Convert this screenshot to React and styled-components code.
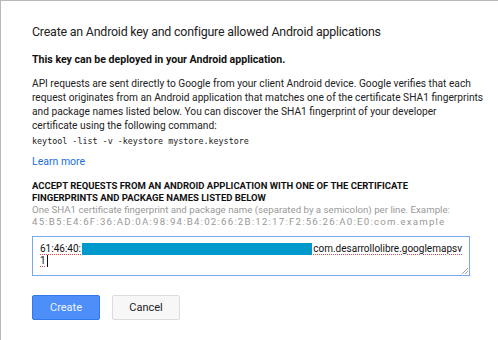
import React from "react";
import styled, { createGlobalStyle } from "styled-components";

const GlobalStyle = createGlobalStyle`
  body {
    margin: 0;
    background: #ffffff;
    font-family: Roboto, "Liberation Sans", Arial, sans-serif;
  }
`;

const Dialog = styled.div`
  width: 498px;
  height: 340px;
  box-sizing: border-box;
  border-top: 1px solid #b8b8b8;
  border-left: 1px solid #b8b8b8;
  padding: 21px 28px 0 31px;
  color: #222;
`;

const Title = styled.h1`
  margin: 0;
  font-size: 12.4px;
  line-height: 20px;
  font-weight: 400;
  letter-spacing: -0.2px;
  white-space: nowrap;
  color: #222;
`;

const Lead = styled.p`
  margin: 11px 0 0;
  font-size: 10.6px;
  line-height: 14px;
  font-weight: 700;
  color: #111;
`;

const Text = styled.p`
  margin: 10px 0 0;
  font-size: 10.2px;
  line-height: 14px;
  white-space: nowrap;
  color: #222;
`;

const Code = styled.div`
  margin-top: 1px;
  font-family: "DejaVu Sans Mono", "Liberation Mono", monospace;
  font-size: 8.4px;
  line-height: 14px;
  color: #222;
`;

const Link = styled.a`
  display: block;
  margin-top: 7px;
  font-size: 10.5px;
  line-height: 14px;
  color: #1a6fe0;
  text-decoration: none;
`;

const Heading = styled.h2`
  margin: 11px 0 0;
  font-size: 9.5px;
  line-height: 12px;
  font-weight: 700;
  white-space: nowrap;
  color: #111;
`;

const Hint = styled.div`
  font-size: 9.7px;
  line-height: 12px;
  white-space: nowrap;
  letter-spacing: ${p => p.$spread || "0"};
  color: #999;
`;

const Field = styled.div`
  position: relative;
  margin-top: 8px;
  width: 438px;
  height: 40px;
  box-sizing: border-box;
  border: 1px solid #7ba6f0;
  padding: 6px 7px;
  font-size: 10px;
  line-height: 12px;
  color: #111;
`;

const Line = styled.div`
  display: flex;
  align-items: center;
  height: 12px;
`;

const Spell = styled.span`
  text-decoration: underline dotted #e44;
  text-decoration-thickness: 1px;
  text-underline-offset: 2px;
`;

const Redacted = styled.span`
  display: inline-block;
  width: 233px;
  height: 12px;
  margin: 0 1px;
  background: #0099cc;
`;

const Caret = styled.span`
  display: inline-block;
  width: 1px;
  height: 12px;
  margin-left: 1px;
  background: #111;
`;

const Grip = styled.svg`
  position: absolute;
  right: 1px;
  bottom: 1px;
`;

const Actions = styled.div`
  display: flex;
  gap: 12px;
  margin-top: 19px;
`;

const Button = styled.button`
  width: 68px;
  height: 25px;
  box-sizing: border-box;
  border-radius: 2px;
  font-family: Roboto, "Liberation Sans", Arial, sans-serif;
  font-size: 11px;
  padding: 0;
  border: 1px solid ${p => (p.$primary ? "#3079ed" : "#dcdcdc")};
  background: ${p => (p.$primary ? "#4d8ef8" : "#f7f7f7")};
  color: ${p => (p.$primary ? "#eef4ff" : "#222")};
`;

export default function App() {
  return (
    <>
      <GlobalStyle />
      <Dialog>
        <Title>Create an Android key and configure allowed Android applications</Title>
        <Lead>This key can be deployed in your Android application.</Lead>
        <Text>
          API requests are sent directly to Google from your client Android device. Google verifies that each
          <br />
          request originates from an Android application that matches one of the certificate SHA1 fingerprints
          <br />
          and package names listed below. You can discover the SHA1 fingerprint of your developer
          <br />
          certificate using the following command:
        </Text>
        <Code>keytool -list -v -keystore mystore.keystore</Code>
        <Link href="#">Learn more</Link>
        <Heading>
          ACCEPT REQUESTS FROM AN ANDROID APPLICATION WITH ONE OF THE CERTIFICATE
          <br />
          FINGERPRINTS AND PACKAGE NAMES LISTED BELOW
        </Heading>
        <Hint>One SHA1 certificate fingerprint and package name (separated by a semicolon) per line. Example:</Hint>
        <Hint $spread="1.2px">45:B5:E4:6F:36:AD:0A:98:94:B4:02:66:2B:12:17:F2:56:26:A0:E0:com.example</Hint>
        <Field>
          <Line>
            <Spell>61:46:40:</Spell>
            <Redacted />
            <Spell>com.desarrollolibre.googlemapsv</Spell>
          </Line>
          <Line>
            <Spell>1</Spell>
            <Caret />
          </Line>
          <Grip width="6" height="6" viewBox="0 0 6 6">
            <path d="M6 0 L0 6 M6 3 L3 6" stroke="#888" strokeWidth="0.8" />
          </Grip>
        </Field>
        <Actions>
          <Button $primary>Create</Button>
          <Button>Cancel</Button>
        </Actions>
      </Dialog>
    </>
  );
}
